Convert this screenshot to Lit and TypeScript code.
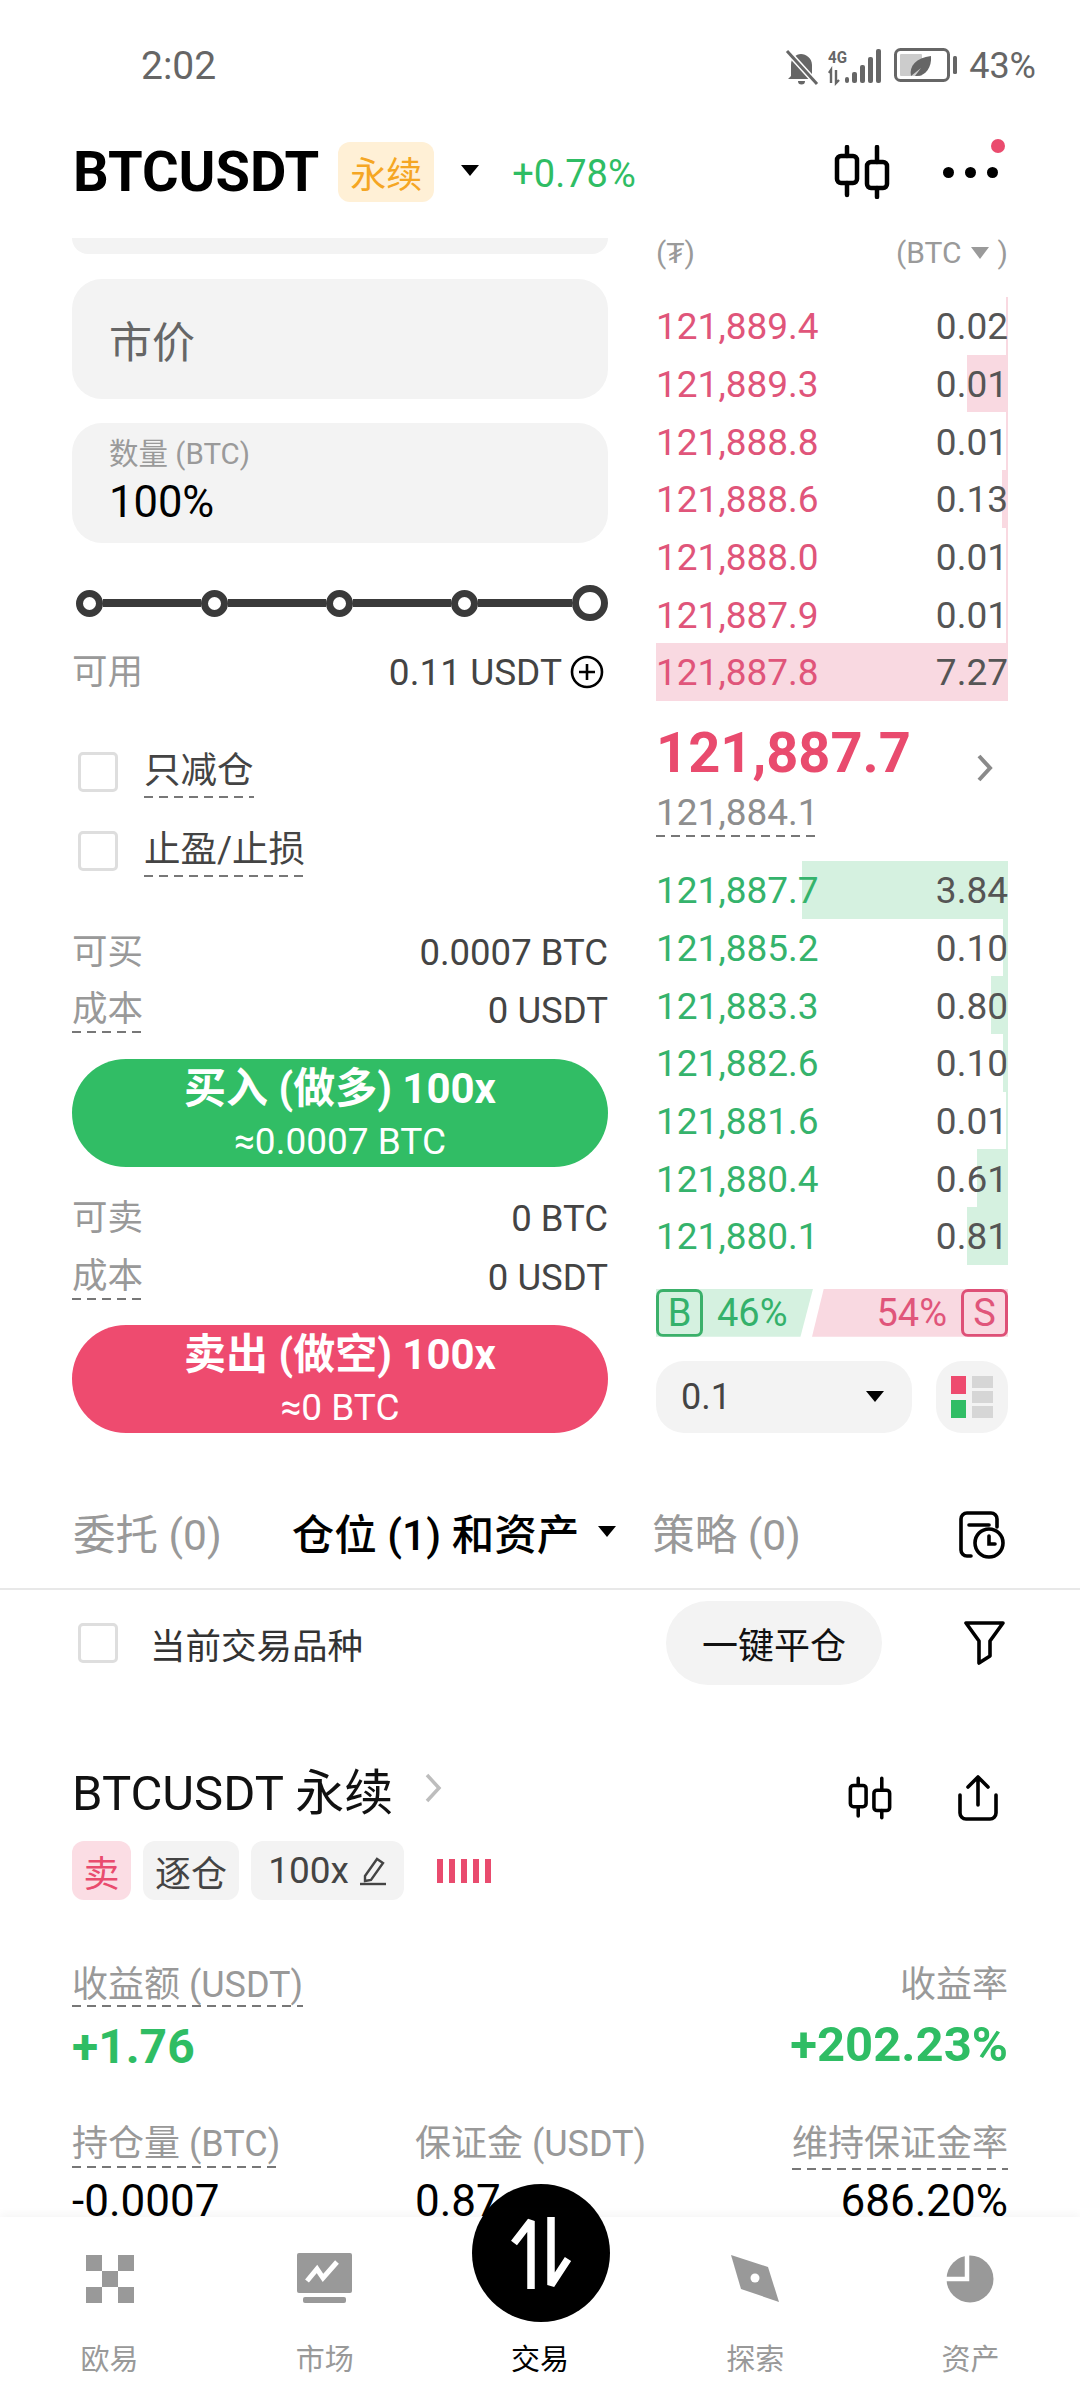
import { LitElement, html, css, svg } from "lit";
import { customElement } from "lit/decorators.js";

const asks = [
  ["121,889.4", "0.02", 2], ["121,889.3", "0.01", 41], ["121,888.8", "0.01", 2],
  ["121,888.6", "0.13", 6], ["121,888.0", "0.01", 2], ["121,887.9", "0.01", 2], ["121,887.8", "7.27", 352],
] as const;
const bids = [
  ["121,887.7", "3.84", 206], ["121,885.2", "0.10", 5], ["121,883.3", "0.80", 17],
  ["121,882.6", "0.10", 5], ["121,881.6", "0.01", 2], ["121,880.4", "0.61", 31], ["121,880.1", "0.81", 41],
] as const;

const candle = (w: number, h: number, sw: number) => svg`
  <svg width=${w} height=${h} viewBox="0 0 56 54" fill="none" stroke="#000" stroke-width=${sw} stroke-linecap="round" stroke-linejoin="round">
    <path d="M13 2v9M13 38v12M43 2v15M43 43v9"/>
    <rect x="3" y="11" width="20" height="27" rx="4"/>
    <rect x="33" y="17" width="20" height="26" rx="4"/>
  </svg>`;

@customElement("app-root")
export class AppRoot extends LitElement {
  static styles = css`
    :host { display: block; width: 1080px; height: 2400px; background: #fff; overflow: hidden;
      font-family: Roboto, "Noto Sans CJK SC", sans-serif; color: #000; }
    * { box-sizing: border-box; }
    svg { display: block; flex: none; }
    .page { height: 2400px; display: flex; flex-direction: column; }

    .status { height: 104px; flex: none; display: flex; align-items: flex-start; padding: 44px 44px 0 141px; color: #666; font-size: 36px; line-height: 44px; }
    .status .time { flex: 1; font-size: 39px; }
    .status .ics { display: flex; align-items: flex-start; }
    .status .pct { margin-left: 11px; }

    .head { height: 130px; flex: none; display: flex; align-items: center; padding: 6px 80px 0 73px; position: relative; }
    .sym { font-size: 56px; font-weight: 700; }
    .tag { width: 96px; height: 60px; border-radius: 12px; background: #fff0d6; color: #f5a623; font-size: 36px; display: flex; align-items: center; justify-content: center; margin-left: 19px; }
    .tri { width: 0; height: 0; border-left: 9px solid transparent; border-right: 9px solid transparent; border-top: 11px solid #000; }
    .head .tri { margin-left: 27px; margin-top: -3px; }
    .chg { color: #2fbd64; font-size: 38px; margin-left: 33px; margin-top: 3px; flex: 1; }
    .dots { display: flex; gap: 11px; margin-left: 53px; margin-right: 2px; }
    .dots i { width: 11px; height: 11px; border-radius: 50%; background: #000; }
    .badge { position: absolute; left: 991px; top: 35px; width: 14px; height: 14px; border-radius: 50%; background: #ea4b6e; }

    .scroll { flex: 1; min-height: 0; overflow: hidden; margin-bottom: -23px; }
    .trade { display: flex; gap: 48px; padding: 4px 72px 0; height: 1199px; }
    .left { width: 536px; flex: none; display: flex; flex-direction: column; }
    .right { width: 352px; flex: none; display: flex; flex-direction: column; }

    .cut { height: 16px; background: #f3f3f3; border-radius: 0 0 30px 30px; flex: none; }
    .box { height: 120px; flex: none; background: #f3f3f3; border-radius: 30px; padding: 0 37px; }
    .market { margin-top: 25px; display: flex; align-items: center; font-size: 43px; color: #666; }
    .qty { margin-top: 24px; }
    .qty .l { font-size: 29.5px; line-height: 40px; padding-top: 11px; color: #9a9a9a; }
    .qty .v { font-size: 43.5px; line-height: 52px; margin-top: 3px; color: #000; }

    .slider { margin-top: 40px; height: 40px; display: flex; align-items: center; padding-left: 4px; flex: none; }
    .slider b { width: 27px; height: 27px; border: 7px solid #3a3a3a; border-radius: 50%; background: #fff; flex: none; }
    .slider b.end { width: 36px; height: 36px; border-width: 7px; }
    .slider i { flex: none; width: 98px; height: 8px; background: #3a3a3a; }
    .slider i.last { flex: 1; width: auto; }

    .kv { display: flex; justify-content: space-between; align-items: center; height: 44px; flex: none; font-size: 36.5px; color: #444; }
    .kv .k { color: #999; line-height: 44px; font-size: 35.5px; }
    .avail { margin-top: 27px; padding-right: 4px; }
    .avail .val { display: flex; align-items: center; gap: 8px; font-size: 37px; }

    .check { display: flex; align-items: center; height: 64px; flex: none; padding-left: 6px; font-size: 36.5px; color: #444; }
    .cb { width: 40px; height: 40px; border: 3px solid #dedede; border-radius: 5px; flex: none; background: #fff; }
    .check .t { margin-left: 26px; }
    .dash { background-image: linear-gradient(90deg, #777 0 9px, transparent 9px 15px); background-size: 15px 2px; background-repeat: repeat-x; background-position: left bottom; padding-bottom: 2px; }
    .check .t.dash { line-height: 50px; }

    .btn { height: 108px; flex: none; border-radius: 54px; color: #fff; display: flex; flex-direction: column; align-items: center; }
    .btn .a { font-size: 42px; font-weight: 700; line-height: 50px; margin-top: 5px; }
    .btn .b { font-size: 37px; line-height: 42px; margin-top: 7px; }
    .buy { background: #31bd65; margin-top: 27px; }
    .sell { background: #ee4b6f; margin-top: 26px; }

    .bookhead { height: 59px; flex: none; display: flex; justify-content: space-between; font-size: 30px; line-height: 30px; color: #9a9a9a; }
    .bookhead .u { display: flex; align-items: center; gap: 9px; height: 30px; }
    .bookhead .dn { width: 0; height: 0; border-left: 9px solid transparent; border-right: 9px solid transparent; border-top: 12px solid #9a9a9a; }
    .row { height: 57.7px; flex: none; display: flex; justify-content: space-between; align-items: center; position: relative; font-size: 37px; padding-top: 2px; color: #555; }
    .row span { position: relative; }
    .row .bar { position: absolute; top: 0; bottom: 0; right: 0; }
    .ask .bar { background: #f9d9e1; }
    .bid .bar { background: #d5f1e0; }
    .ask .p { color: #e0557a; }
    .bid .p { color: #35b36c; }

    .mid { height: 160px; flex: none; display: flex; justify-content: space-between; align-items: center; padding-bottom: 2px; padding-right: 15px; }
    .big { font-size: 56px; font-weight: 700; line-height: 60px; color: #e94b6e; }
    .mark { display: inline-block; font-size: 37px; line-height: 44px; color: #8e8e8e; margin-top: 8px; }

    .ratio { margin-top: 24px; height: 48px; flex: none; display: flex; font-size: 38px; position: relative; }
    .ratio .g, .ratio .r { display: flex; align-items: center; height: 48px; }
    .ratio .g { width: 157px; background: #d5f1e0; color: #34b16b; clip-path: polygon(0 0, 100% 0, 92% 100%, 0 100%); }
    .ratio .r { width: 196px; margin-left: -1px; background: #f9d9e1; color: #e0557a; justify-content: flex-end; clip-path: polygon(6% 0, 100% 0, 100% 100%, 0 100%); }
    .ratio .sq { width: 47px; height: 48px; border: 3px solid; border-radius: 7px; display: flex; align-items: center; justify-content: center; font-size: 38px; flex: none; }
    .ratio .g .sq { border-color: #3bb06a; margin-right: 14px; }
    .ratio .r .sq { border-color: #de5077; margin-left: 14px; }

    .sel { margin-top: 24px; height: 72px; flex: none; display: flex; gap: 24px; }
    .drop { width: 256px; background: #f3f3f3; border-radius: 28px; display: flex; align-items: center; justify-content: space-between; padding: 0 28px 0 25px; font-size: 36px; color: #444; }
    .lay { width: 72px; background: #f3f3f3; border-radius: 26px; display: flex; align-items: center; justify-content: center; }

    .tabs { display: flex; align-items: center; height: 157px; padding: 41px 72px 0 73px; border-bottom: 2px solid #e8e8e8; font-size: 42.5px; color: #999; }
    .tabs .on { color: #000; font-weight: 500; margin-left: 70px; }
    .tabs .tri { margin: 0 0 0 19px; }
    .tabs .st { margin-left: 36px; flex: 1; }
    .tabs svg { margin-top: 8px; margin-right: 3px; }

    .filter { height: 106px; display: flex; align-items: center; padding: 0 72px 0 78px; font-size: 35.5px; color: #333; }
    .filter .ttl { margin-left: 32px; flex: 1; }
    .close { width: 216px; height: 84px; border-radius: 42px; background: #f3f3f3; color: #111; font-size: 36px; display: flex; align-items: center; justify-content: center; }
    .filter svg { margin-left: 82px; margin-right: 3px; }

    .pos { padding: 62px 72px 0 72px; }
    .ph { height: 60px; display: flex; align-items: center; }
    .ph .n { font-size: 49px; color: #111; }
    .ph .c { margin-left: 31px; }
    .ph .ci { margin-top: 20px; }
    .ph .i2 { margin-left: 66px; margin-right: 10px; margin-top: 20px; }
    .tags { margin-top: 23px; height: 59px; display: flex; align-items: center; gap: 12px; font-size: 36px; color: #444; }
    .tags div { height: 59px; border-radius: 12px; background: #f3f3f3; display: flex; align-items: center; justify-content: center; gap: 10px; }
    .tags .s { background: #fbdde4; color: #e94b6e; width: 59px; }
    .tags .z { width: 96px; }
    .tags .x { width: 153px; font-size: 37px; }
    .tags .bars { background: none; gap: 6px; margin-left: 21px; }
    .bars i { width: 6px; height: 24px; background: #e94b6e; }

    .lab { font-size: 36px; line-height: 44px; color: #999; display: inline-block; }
    .s1 { margin-top: 63px; display: flex; justify-content: space-between; height: 44px; }
    .s1 .dash { padding-bottom: 0; }
    .s1v { margin-top: 9px; height: 60px; display: flex; justify-content: space-between; align-items: center; font-size: 48px; line-height: 60px; font-weight: 700; color: #2fbd64; padding-top: 1px; }
    .s1v .rr { font-size: 49px; margin-top: -3px; }
    .s2 { margin-top: 46px; display: grid; grid-template-columns: 343px 1fr auto; height: 48px; }
    .s2 .lab { padding-bottom: 2px; }
    .s2v { margin-top: 6px; display: grid; grid-template-columns: 343px 1fr auto; font-size: 44px; line-height: 50px; font-weight: 400; color: #000; }
    .s2v .m { display: flex; align-items: center; gap: 13px; }
    .s2v .rc { width: 26px; height: 26px; border: 3px solid #000; border-radius: 50%; }

    .nav { height: 183px; flex: none; background: #fff; box-shadow: 0 -4px 8px rgba(0,0,0,.035); display: grid; grid-template-columns: repeat(5, 1fr); padding: 0 2px; position: relative; }
    .tab { display: flex; flex-direction: column; align-items: center; font-size: 29px; color: #999; }
    .tab .ic { height: 88px; padding-top: 38px; }
    .tab .ic.mk { padding-top: 36px; }
    .tab .tx { line-height: 40px; margin-top: 35px; }
    .tab.on { color: #000; }
    .fab { position: absolute; left: 472px; top: -33px; width: 138px; height: 138px; border-radius: 50%; background: #000; display: flex; align-items: center; justify-content: center; }
  `;

  private row(kind: string, r: readonly [string, string, number]) {
    return html`<div class="row ${kind}">
      <div class="bar" style="width:${r[2]}px"></div>
      <span class="p">${r[0]}</span><span>${r[1]}</span>
    </div>`;
  }

  render() {
    return html`<div class="page">
      <div class="status">
        <div class="time">2:02</div>
        <div class="ics">
          <svg width="34" height="38" viewBox="0 0 34 38" style="margin-top:5px"><path d="M6 27V16C6 9 11 5 16 5s11 4 11 11v11l3 3H3z" fill="#666"/><path d="M13 32h7a3.5 3.5 0 0 1-7 0z" fill="#666"/><path d="M3 3l29 32" stroke="#fff" stroke-width="6"/><path d="M2 2l30 33" stroke="#666" stroke-width="3"/></svg>
          <svg width="58" height="40" viewBox="0 0 58 40" style="margin:4px 0 0 9px"><text x="0" y="15" font-family="Roboto" font-weight="700" font-size="17" fill="#666" textLength="19" lengthAdjust="spacingAndGlyphs">4G</text><path d="M3 35V22l-2 3M8 22v13l3-3" stroke="#666" stroke-width="2.4" fill="none"/><rect x="17" y="29" width="4" height="6" rx="2" fill="#666"/><rect x="24" y="24" width="5" height="11" rx="2" fill="#666"/><rect x="32" y="17" width="5" height="18" rx="2" fill="#666"/><rect x="40" y="9" width="5" height="26" rx="2" fill="#666"/><rect x="48" y="1" width="5" height="34" rx="2" fill="#666"/></svg>
          <svg width="64" height="36" viewBox="0 0 64 36" style="margin:4px 0 0 8px"><rect x="1.5" y="1.5" width="53" height="31" rx="5" fill="none" stroke="#666" stroke-width="3"/><rect x="6" y="6" width="22" height="22" rx="1" fill="#ccc"/><path d="M17 28c-2-10 5-18 20-20 1 12-6 21-16 20l6-8z" fill="#666"/><rect x="59" y="8" width="4" height="18" rx="1.5" fill="#666"/></svg>
          <div class="pct">43%</div>
        </div>
      </div>

      <div class="head">
        <div class="sym">BTCUSDT</div>
        <div class="tag">永续</div>
        <div class="tri"></div>
        <div class="chg">+0.78%</div>
        ${candle(56, 54, 4.5)}
        <div class="dots"><i></i><i></i><i></i></div>
        <div class="badge"></div>
      </div>

      <div class="scroll">
        <div class="trade">
          <div class="left">
            <div class="cut"></div>
            <div class="box market">市价</div>
            <div class="box qty"><div class="l">数量 (BTC)</div><div class="v">100%</div></div>
            <div class="slider"><b></b><i></i><b></b><i></i><b></b><i></i><b></b><i class="last"></i><b class="end"></b></div>
            <div class="kv avail"><span class="k">可用</span><span class="val">0.11 USDT
              <svg width="34" height="34" viewBox="0 0 34 34" fill="none" stroke="#000" stroke-width="2.6"><circle cx="17" cy="17" r="15"/><path d="M17 9v16M9 17h16"/></svg></span></div>
            <div class="check" style="margin-top:46px"><div class="cb"></div><span class="t dash">只减仓</span></div>
            <div class="check" style="margin-top:15px"><div class="cb"></div><span class="t dash">止盈/止损</span></div>
            <div class="kv" style="margin-top:47px"><span class="k">可买</span><span>0.0007 BTC</span></div>
            <div class="kv" style="margin-top:14px"><span class="k dash">成本</span><span>0 USDT</span></div>
            <div class="btn buy"><div class="a">买入 (做多) 100x</div><div class="b">≈0.0007 BTC</div></div>
            <div class="kv" style="margin-top:29px"><span class="k">可卖</span><span>0 BTC</span></div>
            <div class="kv" style="margin-top:15px"><span class="k dash">成本</span><span>0 USDT</span></div>
            <div class="btn sell"><div class="a">卖出 (做空) 100x</div><div class="b">≈0 BTC</div></div>
          </div>

          <div class="right">
            <div class="bookhead"><span>(₮)</span><span class="u">(BTC <i class="dn"></i> )</span></div>
            ${asks.map((r) => this.row("ask", r))}
            <div class="mid">
              <div>
                <div class="big">121,887.7</div>
                <div class="mark dash">121,884.1</div>
              </div>
              <svg width="16" height="28" viewBox="0 0 16 28" fill="none" stroke="#8a8a8a" stroke-width="4" style="margin-bottom:23px"><path d="M2 2l11 12L2 26"/></svg>
            </div>
            ${bids.map((r) => this.row("bid", r))}
            <div class="ratio">
              <div class="g"><div class="sq">B</div>46%</div>
              <div class="r">54%<div class="sq">S</div></div>
            </div>
            <div class="sel">
              <div class="drop">0.1<div class="tri"></div></div>
              <div class="lay">
                <svg width="42" height="42" viewBox="0 0 42 42"><rect x="0" y="0" width="15" height="18" fill="#ee4b6f"/><rect x="0" y="24" width="15" height="18" fill="#31bd65"/><rect x="21" y="0" width="21" height="12" fill="#d6d6d6"/><rect x="21" y="15" width="21" height="12" fill="#d6d6d6"/><rect x="21" y="30" width="21" height="12" fill="#d6d6d6"/></svg>
              </div>
            </div>
          </div>
        </div>

        <div class="tabs">
          <span>委托 (0)</span>
          <span class="on">仓位 (1) 和资产</span>
          <div class="tri"></div>
          <span class="st">策略 (0)</span>
          <svg width="46" height="48" viewBox="0 0 46 48" fill="none" stroke="#000" stroke-width="3.6" stroke-linecap="round"><path d="M12 45H8a6 6 0 0 1-6-6V8a6 6 0 0 1 6-6h24a6 6 0 0 1 6 6v8"/><path d="M10 14h20"/><circle cx="30" cy="32" r="14"/><path d="M30 25v8h6"/></svg>
        </div>

        <div class="filter">
          <div class="cb"></div>
          <span class="ttl">当前交易品种</span>
          <div class="close">一键平仓</div>
          <svg width="41" height="44" viewBox="0 0 41 44" fill="none" stroke="#000" stroke-width="3.6" stroke-linejoin="round"><path d="M2 2h37L26 20v15l-11 7V20z"/></svg>
        </div>

        <div class="pos">
          <div class="ph">
            <span class="n">BTCUSDT 永续</span>
            <svg class="c" width="18" height="30" viewBox="0 0 18 30" fill="none" stroke="#bdbdbd" stroke-width="3.5"><path d="M3 2l12 13L3 28"/></svg>
            <div style="flex:1"></div>
            <div class="ci">${candle(44, 46, 4.5)}</div>
            <svg class="i2" width="40" height="46" viewBox="0 0 40 46" fill="none" stroke="#000" stroke-width="3.6" stroke-linecap="round" stroke-linejoin="round"><path d="M20 30V3M10 12l10-10 10 10"/><path d="M2 20v18a6 6 0 0 0 6 6h24a6 6 0 0 0 6-6V20"/></svg>
          </div>
          <div class="tags">
            <div class="s">卖</div>
            <div class="z">逐仓</div>
            <div class="x">100x
              <svg width="28" height="30" viewBox="0 0 28 30" fill="none" stroke="#444" stroke-width="2.4"><path d="M6 20L18 3l6 4-12 17-6 1z"/><path d="M1 28h26"/></svg></div>
            <div class="bars"><i></i><i></i><i></i><i></i><i></i></div>
          </div>
          <div class="s1"><span class="lab dash">收益额 (USDT)</span><span class="lab">收益率</span></div>
          <div class="s1v"><span>+1.76</span><span class="rr">+202.23%</span></div>
          <div class="s2"><span><span class="lab dash">持仓量 (BTC)</span></span><span><span class="lab">保证金 (USDT)</span></span><span class="lab dash">维持保证金率</span></div>
          <div class="s2v"><span>-0.0007</span><span class="m">0.87<i class="rc"></i></span><span>686.20%</span></div>
        </div>
      </div>

      <div class="nav">
        <div class="tab"><div class="ic">
          <svg width="48" height="48" viewBox="0 0 48 48" fill="#999"><rect width="16" height="16"/><rect x="32" width="16" height="16"/><rect x="16" y="16" width="16" height="16"/><rect y="32" width="16" height="16"/><rect x="32" y="32" width="16" height="16"/></svg></div><div class="tx">欧易</div></div>
        <div class="tab"><div class="ic mk">
          <svg width="55" height="50" viewBox="0 0 55 50"><rect width="55" height="40" rx="2" fill="#999"/><path d="M10 28l10-12 6 9 14-16" fill="none" stroke="#fff" stroke-width="5"/><rect x="6" y="44" width="43" height="6" rx="2" fill="#999"/></svg></div><div class="tx">市场</div></div>
        <div class="tab on"><div class="ic"></div><div class="tx">交易</div></div>
        <div class="tab"><div class="ic">
          <svg width="48" height="48" viewBox="0 0 48 48"><path d="M0 0l37 12 11 35-38-13z" fill="#999"/><circle cx="24" cy="23" r="4.5" fill="#fff"/></svg></div><div class="tx">探索</div></div>
        <div class="tab"><div class="ic">
          <svg width="48" height="48" viewBox="0 0 48 48"><circle cx="24" cy="24" r="23.5" fill="#999"/><path d="M21 0v24H0" fill="none" stroke="#fff" stroke-width="4.5"/></svg></div><div class="tx">资产</div></div>
        <div class="fab">
          <svg width="70" height="72" viewBox="0 0 70 72" fill="none" stroke="#fff" stroke-width="7.5" stroke-linejoin="bevel"><path d="M25 72V4L8 26"/><path d="M45 0v68l17-26"/></svg>
        </div>
      </div>
    </div>`;
  }
}
